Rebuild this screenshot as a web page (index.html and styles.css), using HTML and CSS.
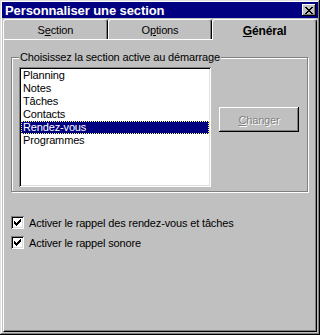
FILE: index.html
```html
<!DOCTYPE html>
<html>
<head>
  <title>Personnaliser une section</title>
  <link rel="stylesheet" href="styles.css">
</head>
<body>

<div class="window">
  <div class="titlebar">
    <span class="title">Personnaliser une section</span>
    <span class="close">
      <svg width="8" height="7" viewBox="0 0 8 7" shape-rendering="crispEdges">
        <path d="M0 0h2v1h-2zM6 0h2v1h-2zM1 1h2v1h-2zM5 1h2v1h-2zM2 2h4v1h-4zM3 3h2v1h-2zM2 4h4v1h-4zM1 5h2v1h-2zM5 5h2v1h-2zM0 6h2v1h-2zM6 6h2v1h-2z" fill="#000"/>
      </svg>
    </span>
  </div>

  <div class="tabs">
    <div class="tab">S<u>e</u>ction</div>
    <div class="tab">O<u>p</u>tions</div>
    <div class="tab active"><u>G</u>énéral</div>
  </div>

  <div class="panel">
    <fieldset class="group">
      <legend>Choisissez la section active au démarrage</legend>
      <div class="group-body">
        <ul class="list">
          <li>Planning</li>
          <li>Notes</li>
          <li>Tâches</li>
          <li>Contacts</li>
          <li class="selected">Rendez-vous</li>
          <li>Programmes</li>
        </ul>
        <button class="btn" disabled><u>C</u>hanger</button>
      </div>
    </fieldset>

    <div class="checks">
      <label class="check">
        <span class="box"><svg width="7" height="7" viewBox="0 0 7 7" shape-rendering="crispEdges"><path d="M6 0h1v3h-1v1h-1v1h-1v1h-1v1h-1v-1h-1v-1h-1v-3h1v1h1v1h1v-1h1v-1h1z" fill="#000"/></svg></span>
        Activer le rappel des rendez-vous et tâches
      </label>
      <label class="check">
        <span class="box"><svg width="7" height="7" viewBox="0 0 7 7" shape-rendering="crispEdges"><path d="M6 0h1v3h-1v1h-1v1h-1v1h-1v1h-1v-1h-1v-1h-1v-3h1v1h1v1h1v-1h1v-1h1z" fill="#000"/></svg></span>
        Activer le rappel sonore
      </label>
    </div>
  </div>
</div>

</body>
</html>
```

FILE: styles.css
```css
	* {
	 box-sizing: border-box;
	}

	body {
	margin: 0;
	background-color: #c0c0c0;
	font-family: 'Liberation Sans', Arial, sans-serif;
	font-size: 11px;
	letter-spacing: -0.15px;
	color: #000;
	}

	.window {
	width: 320px;
	height: 335px;
	padding: 2px;
	display: flex;
	flex-direction: column;
	background-color: #c0c0c0;
	box-shadow: inset -1px -1px #000, inset 1px 1px #dfdfdf, inset -2px -2px #808080, inset 2px 2px #fff;
	}

	.titlebar {
	height: 16px;
	background-color: #000080;
	color: #fff;
	display: flex;
	align-items: center;
	justify-content: space-between;
	padding: 0 2px 0 3px;
	}

	.title {
	font-weight: bold;
	font-size: 13px;
	letter-spacing: -0.1px;
	}

	.close {
	width: 14px;
	height: 12px;
	background-color: #c0c0c0;
	display: flex;
	align-items: center;
	justify-content: center;
	box-shadow: inset -1px -1px #000, inset 1px 1px #fff, inset -2px -2px #808080;
	}

	.tabs {
	display: flex;
	margin: 1px 1px 0 1px;
	height: 20px;
	}

	.tab {
	flex: 1;
	display: flex;
	align-items: center;
	justify-content: center;
	border-top: 1px solid #fff;
	border-left: 1px solid #fff;
	border-right: 1px solid #000;
	border-radius: 3px 3px 0 0;
	box-shadow: inset -1px 0 #808080;
	padding-top: 1px;
	}

	.tab.active {
	font-weight: bold;
	font-size: 12px;
	position: relative;
	z-index: 1;
	height: 21px;
	background-color: #c0c0c0;
	padding-top: 2px;
	}

	.panel {
	flex: 1;
	margin: 0 1px 1px 1px;
	border-top: 1px solid #fff;
	border-left: 1px solid #fff;
	border-right: 1px solid #000;
	border-bottom: 1px solid #000;
	box-shadow: inset -1px -1px #808080;
	padding: 0 8px 0 7px;
	}

	.group {
	margin: 11px 0 0 0;
	padding: 3px 7px 4px 7px;
	border: 1px solid #808080;
	box-shadow: 1px 1px 0 #fff, inset 1px 1px 0 #fff;
	}

	.group legend {
	padding: 0 1px;
	line-height: 13px;
	background-color: #c0c0c0;
	}

	.group-body {
	display: flex;
	align-items: flex-start;
	gap: 8px;
	}

	.list {
	list-style: none;
	margin: 0;
	padding: 2px;
	width: 192px;
	height: 120px;
	background-color: #fff;
	box-shadow: inset 1px 1px #808080, inset -1px -1px #fff, inset 2px 2px #000, inset -2px -2px #dfdfdf;
	}

	.list li {
	height: 13px;
	line-height: 13px;
	padding-left: 2px;
	}

	.list li.selected {
	background-color: #000080;
	color: #fff;
	outline: 1px dotted #ffff80;
	outline-offset: -1px;
	}

	.btn {
	margin-top: 40px;
	width: 80px;
	height: 25px;
	background-color: #c0c0c0;
	border: none;
	font-family: inherit;
	font-size: 11px;
	letter-spacing: -0.15px;
	color: #808080;
	text-shadow: 1px 1px #fff;
	box-shadow: inset -1px -1px #000, inset 1px 1px #fff, inset -2px -2px #808080;
	}

	.checks {
	margin-top: 24px;
	display: flex;
	flex-direction: column;
	gap: 7px;
	}

	.check {
	display: flex;
	align-items: center;
	gap: 5px;
	height: 13px;
	}

	.box {
	width: 13px;
	height: 13px;
	background-color: #fff;
	display: flex;
	align-items: center;
	justify-content: center;
	box-shadow: inset 1px 1px #808080, inset -1px -1px #fff, inset 2px 2px #000, inset -2px -2px #dfdfdf;
	}
```
